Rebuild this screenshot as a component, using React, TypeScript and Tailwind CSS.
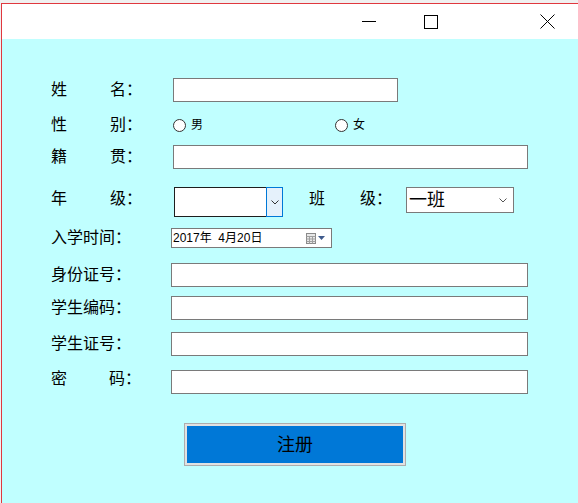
const cn = "font-['Liberation_Sans','Noto_Sans_CJK_SC',sans-serif]";

const TwoChar = ({ a, b, gap = "w-[59px]" }: { a: string; b: string; gap?: string }) => (
  <div className="flex items-center text-[16px] leading-none">
    <span className={gap}>{a}</span>
    <span>{b}：</span>
  </div>
);

const TextBox = ({ w }: { w: string }) => (
  <div className={`${w} h-[24px] bg-white border border-[#7a7a7a]`} />
);

const TitleBar = () => (
  <div className="h-[35px] bg-white flex items-center pl-[360px]">
    <div className="w-[14px] h-[1px] bg-black" />
    <div className="ml-[48px] w-[14px] h-[14px] border border-black" />
    <svg className="ml-[102px]" width="15" height="15" viewBox="0 0 15 15">
      <path d="M0.5 0.5L14.5 14.5M14.5 0.5L0.5 14.5" stroke="black" strokeWidth="1" />
    </svg>
  </div>
);

const Radio = ({ label }: { label: string }) => (
  <div className="flex items-center">
    <div className="w-[13px] h-[13px] rounded-full border border-[#333333] bg-white" />
    <span className="ml-[5px] text-[12px] leading-none">{label}</span>
  </div>
);

const App = () => {
  return (
    <div className={`w-[578px] h-[503px] bg-[#f0f0f0] pt-[3px] pl-[1px] overflow-hidden text-black ${cn}`}>
      <div className="h-full border-l border-t border-[#e0383e] flex flex-col">
        <TitleBar />
        <div className="flex-1 bg-[#c0ffff] pl-[49px] pt-[39px]">
          {/* 姓名 */}
          <div className="flex items-center h-[24px]">
            <div className="w-[122px]">
              <TwoChar a="姓" b="名" />
            </div>
            <TextBox w="w-[225px]" />
          </div>

          {/* 性别 */}
          <div className="flex items-center h-[20px] mt-[13px]">
            <div className="w-[122px]">
              <TwoChar a="性" b="别" />
            </div>
            <div className="w-[162px]">
              <Radio label="男" />
            </div>
            <Radio label="女" />
          </div>

          {/* 籍贯 */}
          <div className="flex items-center h-[24px] mt-[10px]">
            <div className="w-[122px]">
              <TwoChar a="籍" b="贯" />
            </div>
            <TextBox w="w-[355px]" />
          </div>

          {/* 年级 / 班级 */}
          <div className="flex items-start h-[30px] mt-[18px]">
            <div className="w-[123px] h-[24px] flex items-center">
              <TwoChar a="年" b="级" />
            </div>
            <div className="w-[109px] h-[30px] flex">
              <div className="flex-1 bg-white border border-r-0 border-[#1e1e1e]" />
              <div className="w-[17px] h-full bg-[#e5f1fb] border border-[#0078d7] flex items-center justify-center">
                <svg width="8" height="5" viewBox="0 0 8 5">
                  <path d="M0.5 0.5L4 4L7.5 0.5" stroke="#333" fill="none" strokeWidth="1" />
                </svg>
              </div>
            </div>
            <div className="ml-[26px] h-[24px] flex items-center">
              <TwoChar a="班" b="级" gap="w-[51px]" />
            </div>
            <div className="ml-[14px] w-[108px] h-[26px] bg-white border border-[#7a7a7a] flex items-center pl-[2px] pr-[6px]">
              <span className="text-[18px] leading-none flex-1">一班</span>
              <svg width="8" height="5" viewBox="0 0 8 5">
                <path d="M0.5 0.5L4 4L7.5 0.5" stroke="#555" fill="none" strokeWidth="1" />
              </svg>
            </div>
          </div>

          {/* 入学时间 */}
          <div className="flex items-center h-[20px] mt-[11px]">
            <div className="w-[120px] text-[16px] leading-none">入学时间：</div>
            <div className="w-[161px] h-[20px] bg-white border border-[#7a7a7a] flex items-center pl-[1px] pr-[6px]">
              <span className="text-[12px] leading-none flex-1 whitespace-pre">2017年  4月20日</span>
              <svg width="10" height="11" viewBox="0 0 10 11">
                <rect x="0.5" y="0.5" width="9" height="10" fill="#e8e8e8" stroke="#8a8a8a" />
                <path d="M0.5 3.5H9.5M0.5 6H9.5M0.5 8.5H9.5M3.5 3.5V10.5M6.5 3.5V10.5" stroke="#a0a0a0" strokeWidth="1" />
              </svg>
              <svg className="ml-[2px]" width="7" height="4" viewBox="0 0 7 4">
                <path d="M0 0H7L3.5 4Z" fill="#3f5b8c" />
              </svg>
            </div>
          </div>

          {/* 身份证号 */}
          <div className="flex items-center h-[24px] mt-[15px]">
            <div className="w-[120px] text-[16px] leading-none">身份证号：</div>
            <TextBox w="w-[357px]" />
          </div>

          {/* 学生编码 */}
          <div className="flex items-center h-[24px] mt-[9px]">
            <div className="w-[120px] text-[16px] leading-none">学生编码：</div>
            <TextBox w="w-[357px]" />
          </div>

          {/* 学生证号 */}
          <div className="flex items-center h-[24px] mt-[12px]">
            <div className="w-[120px] text-[16px] leading-none">学生证号：</div>
            <TextBox w="w-[357px]" />
          </div>

          {/* 密码 */}
          <div className="flex items-start h-[24px] mt-[14px]">
            <div className="w-[120px] h-[17px] flex items-center">
              <TwoChar a="密" b="码" gap="w-[58px]" />
            </div>
            <TextBox w="w-[357px]" />
          </div>

          <div className="mt-[29px] ml-[133px] w-[222px] h-[43px] border border-[#adadad] bg-[#e1e1e1] p-[2px]">
            <div className="w-full h-full bg-[#0078d7] flex items-center justify-center text-[18px] leading-none">
              注册
            </div>
          </div>
        </div>
      </div>
    </div>
  );
};

export default App;
